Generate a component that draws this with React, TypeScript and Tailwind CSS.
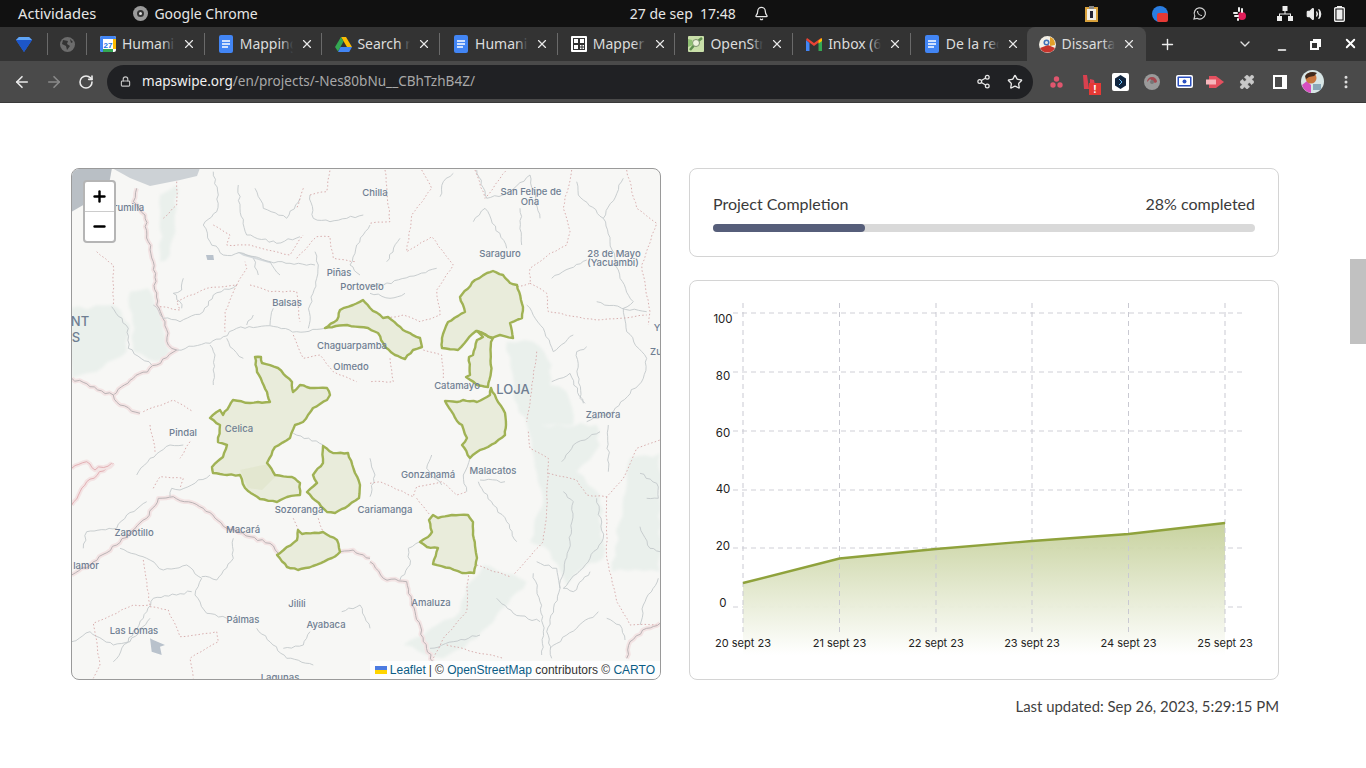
import React from "react";
import { ArrowLeft, ArrowRight, RotateCw, Lock, Share2, Star, MoreVertical, ChevronDown, Plus, X, Minus, Bell, Volume2, Puzzle } from "lucide-react";

type Off = [number, number];
const Q1: Off = [70, 165], Q2: Off = [370, 165], Q3: Off = [70, 425], Q4: Off = [370, 425];
const tx = (o: Off, s: string) =>
  s.split(" ").map((p) => { const [x, y] = p.split(",").map(Number); return `${(o[0] + x / 3).toFixed(1)},${(o[1] + y / 3).toFixed(1)}`; }).join(" ");

const rnd = (n: number) => { const v = Math.sin(n * 12.9898) * 43758.5453; return v - Math.floor(v); };
function wiggle(s: string, amp: number, step = 5, seed = 1, closed = false) {
  const pts = s.split(" ").map((p) => p.split(",").map(Number));
  if (closed) pts.push(pts[0]);
  const out: string[] = [];
  let c = seed * 7.3;
  for (let i = 0; i < pts.length - 1; i++) {
    const [x0, y0] = pts[i], [x1, y1] = pts[i + 1];
    const len = Math.hypot(x1 - x0, y1 - y0);
    const n = Math.max(1, Math.round(len / step));
    const nx = (y0 - y1) / (len || 1), ny = (x1 - x0) / (len || 1);
    for (let k = 0; k < n; k++) {
      const t = k / n;
      const d = k === 0 ? 0 : (rnd((c += 1.37)) - 0.5) * 2 * amp;
      out.push(`${(x0 + (x1 - x0) * t + nx * d).toFixed(1)},${(y0 + (y1 - y0) * t + ny * d).toFixed(1)}`);
    }
  }
  if (!closed) out.push(pts[pts.length - 1].join(","));
  return out.join(" ");
}

const patches: [Off, string][] = [
  [Q1, "270,90 320,60 320,130 300,270 270,290"],
  [Q1, "0,430 130,420 180,480 170,560 80,620 5,640"],
  [Q1, "180,380 235,370 255,420 280,470 300,560 260,590 190,560"],
  [Q2, "410,530 490,530 545,600 540,660 590,680 610,780 470,780 430,700"],
  [Q4, "470,0 680,0 690,60 620,140 690,210 700,400 640,430 590,480 540,380 480,350 520,220"],
  [Q4, "780,100 870,85 870,440 725,440"],
  [Q4, "290,480 340,420 470,470 380,570 320,640 220,700 100,660 200,600 270,560"],
];
const rivers: [Off, string][] = [
  [Q1, "430,20 445,90 440,140 400,180 420,230 460,270 520,265 600,290 660,295 735,300"],
  [Q1, "505,60 510,130 530,210 620,235 690,215"],
  [Q1, "555,70 580,130 650,160 690,100"],
  [Q1, "720,90 730,160 780,170 880,150"],
  [Q1, "735,260 745,300 740,340 720,420 715,490"],
  [Q1, "550,280 565,330"], [Q1, "600,290 630,330"],
  [Q1, "340,340 335,375 310,385 330,410 335,430"],
  [Q1, "500,360 430,390 400,440 330,470 280,460 250,420"],
  [Q1, "320,555 420,535 460,515 500,490 600,482 680,500 765,490"],
  [Q1, "470,520 480,545 520,580"], [Q1, "420,540 435,570 430,660"],
  [Q1, "125,425 175,490 175,550 245,600"], [Q1, "550,450 530,480"], [Q1, "610,430 600,480"],
  [Q1, "900,180 860,240 840,300 870,330"],
  [Q2, "620,50 625,90 700,160 760,40"],
  [Q2, "700,160 720,230 750,340 790,410 760,430 770,500 830,580 820,640 730,740 650,770"],
  [Q2, "310,170 345,130 410,250"], [Q2, "210,95 220,50 250,25"],
  [Q2, "320,15 350,100 410,85 480,30 510,160"],
  [Q2, "545,340 600,310 650,285"], [Q2, "470,420 520,490 550,560 610,510"],
  [Q2, "650,545 620,560 630,700 645,715"], [Q2, "545,650 600,625 640,715"],
  [Q2, "0,360 40,360 200,310"], [Q2, "0,385 60,400 105,385"], [Q2, "50,290 90,220"],
  [Q2, "450,130 455,240"], [Q2, "680,410 755,430 830,440"],
  [Q4, "325,170 370,240 410,290 440,350"], [Q4, "405,170 330,165"],
  [Q4, "580,200 610,230 600,350 570,490 530,620 545,700"],
  [Q4, "680,220 700,340 660,400 580,490 610,500 660,440"],
  [Q4, "500,410 560,430 570,490"], [Q4, "490,445 510,530 520,620 515,690"],
  [Q4, "380,520 430,565 510,590"], [Q4, "540,670 620,610 685,560"], [Q4, "710,580 750,600 765,645"],
  [Q4, "715,0 715,140"], [Q4, "575,110 610,60 690,20"], [Q4, "810,305 840,370 870,380"],
  [Q4, "865,460 820,540 810,600"], [Q4, "810,145 860,175 865,220 830,220"],
  [Q4, "290,200 280,150 300,100"], [Q4, "0,100 15,150 0,215"], [Q4, "150,350 115,370 120,420 90,465"],
  [Q4, "185,90 170,130 215,180"], [Q4, "180,670 250,650 330,630"],
  [Q3, "420,150 330,195 305,190 300,215"], [Q3, "200,150 240,100 300,60 340,60"],
  [Q3, "40,370 50,320 140,310 170,270 230,230"],
  [Q3, "150,370 230,400 280,435 350,420 395,460 375,510 410,565 470,580"],
  [Q3, "560,610 650,700 730,720"], [Q3, "5,650 60,620 130,660 180,650 240,580"],
  [Q3, "365,500 250,520 220,580 130,710"], [Q3, "490,340 490,400 440,465 395,455"],
  [Q3, "670,25 760,60"], [Q3, "815,560 870,540 900,610"], [Q3, "640,670 700,660 720,620"],
];
const dots: [Off, string][] = [
  [Q1, "80,260 130,300 130,420"], [Q1, "320,50 320,120 280,160"],
  [Q1, "430,180 480,210 470,240 540,240 660,270 700,210"], [Q1, "700,70 680,130"],
  [Q1, "720,90 770,80 780,15"], [Q1, "270,425 330,435 320,410 410,370 500,360 530,310 525,290"],
  [Q1, "500,360 465,440 465,500"], [Q1, "540,360 600,380 680,380 690,470"],
  [Q1, "680,280 740,215 780,215 790,280 860,290"], [Q1, "670,510 700,580 750,570 790,620 860,650"],
  [Q1, "220,740 310,705 370,740"],
  [Q2, "45,15 60,170 0,175"],
  [Q2, "155,15 185,70 125,150 110,260 185,215 250,300 200,375 210,450 150,470 100,450 40,460"],
  [Q2, "605,15 580,130 600,200 590,240 540,265 480,310 480,355 440,365"],
  [Q2, "480,355 530,385 535,440 680,465 750,460 830,450"],
  [Q2, "770,15 800,130 860,175 815,300 840,440 835,480"], [Q2, "315,15 345,100 410,15"],
  [Q2, "160,555 215,570 220,640"], [Q2, "60,580 70,650 0,650"], [Q2, "500,560 490,640 470,770"],
  [Q4, "475,20 480,70 535,100 530,250 520,350 430,450"],
  [Q4, "535,145 620,165 650,210 710,215 760,160 800,70 870,45"],
  [Q4, "710,215 710,400 740,530 780,600 860,600"], [Q4, "295,440 290,560 220,640 190,700"],
  [Q4, "320,420 420,455"], [Q4, "230,660 400,700"],
  [Q4, "0,175 30,170 130,215 140,185 215,170 260,210 290,200"], [Q4, "140,220 180,270"],
  [Q3, "220,405 240,540 190,540 70,595 90,720 70,760"],
  [Q3, "240,545 295,555 330,635 440,620 445,650 360,700 370,760"],
  [Q3, "240,0 255,80"], [Q3, "360,50 330,100"], [Q3, "250,190 270,155 340,160 330,190"],
  [Q3, "670,280 690,330"], [Q3, "745,280 760,322"],
];
const borders: [Off, string][] = [
  [Q1, "200,70 190,110 225,150 235,230 250,290 260,420 285,470 295,540 320,555 260,600 190,640 130,690 60,665 5,640"],
  [Q1, "130,690 150,720 210,745"],
  [Q3, "5,240 50,170 130,115"],
  [Q3, "5,130 50,110 75,135 125,115"],
  [Q3, "5,450 60,420 140,360 230,280 265,220 310,215 400,250 470,310 540,335 600,355 625,385"],
  [Q3, "810,380 850,375 900,400"],
  [Q4, "0,410 40,460 110,470 135,560 160,650 190,710"],
  [Q4, "770,700 780,650 830,610 870,595"],
];
const polys: string[] = [
  "325,328 337,320 340,310 353,305 363,300 370,308 383,318 388,317 403,330 420,338 422,347 413,350 405,359 395,355 385,347 378,333 368,328 347,325",
  "493,271 503,275 510,283 517,285 523,307 522,318 510,323 513,338 500,335 492,338 482,333 476,331 467,340 458,350 442,348 442,338 448,322 465,312 460,297 475,280 487,273",
  "477,331 483,337 477,340 473,355 469,357 470,375 466,377 477,385 488,387 491,372 491,342 493,338",
  "445,401 457,402 463,400 477,402 490,395 491,388 498,402 505,413 506,425 505,435 495,443 477,452 470,458 462,445 467,438 462,425 457,421",
  "255,357 261,357 262,363 278,368 292,382 293,392 300,385 310,388 327,388 330,395 327,400 313,408 303,422 295,425 290,438 275,447 267,463 275,475 292,477 300,483 300,495 287,497 277,502 260,499 245,488 240,475 227,475 213,473 212,467 223,457 227,445 218,442 220,425 210,418 220,410 223,415 233,400 250,403 270,402 267,392 257,372",
  "323,446 333,453 348,453 355,473 360,485 359,498 345,508 335,513 327,512 307,492 317,483 313,475 323,463",
  "298,530 302,534 323,532 337,540 340,552 332,558 313,566 298,570 287,567 277,555 297,540",
  "433,515 438,518 452,515 468,515 473,522 473,535 476,553 477,558 474,573 462,573 450,568 433,564 438,548 427,547 420,542 428,537 432,532 429,520",
];
const labels: [string, number, number, number?][] = [
  ["Chilla", 375, 196], ["San Felipe de", 531, 195], ["Oña", 530, 205], ["rumilla", 129, 211], ["Piñas", 339, 276],
  ["Portovelo", 362, 290], ["Balsas", 287, 306], ["Saraguro", 500, 257], ["28 de Mayo", 614, 257], ["(Yacuambi)", 613, 266],
  ["Chaguarpamba", 352, 349], ["Olmedo", 351, 370], ["Catamayo", 457, 389], ["LOJA", 513, 394, 13], ["Zamora", 603, 418],
  ["Pindal", 183, 436], ["Celica", 239, 432], ["Gonzanamá", 428, 478], ["Malacatos", 493, 474], ["Sozoranga", 299, 513],
  ["Cariamanga", 385, 513], ["Macará", 243, 533], ["Zapotillo", 134, 536], ["lamor", 86, 569], ["Amaluza", 431, 606],
  ["Jilili", 297, 607], ["Pálmas", 243, 623], ["Ayabaca", 326, 628], ["Las Lomas", 134, 634], ["Lagunas", 280, 681],
  ["Y", 657, 331], ["Zu", 656, 355], ["NT", 80, 326, 13], ["S", 76, 342, 13],
];

function MapView() {
  return (
    <div className="relative h-[512px] overflow-hidden rounded-lg border border-[#9a9a9a] bg-[#f7f7f5]">
      <svg viewBox="72 169 588 510" className="block h-[510px] w-[588px]">
        <defs><filter id="soft" x="-10%" y="-10%" width="120%" height="120%"><feGaussianBlur stdDeviation="1.6" /></filter></defs>
        <g filter="url(#soft)">
          {patches.map(([o, s], i) => <polygon key={i} points={wiggle(tx(o, s), 2.5, 8, i + 1, true)} fill="#eaf0ec" />)}
        </g>
        <polygon points="71,168 112,168 108,190 92,200 71,212" fill="#b9bfc5" />
        <polygon points="112,168 200,168 197,176 180,180 150,186 130,178" fill="#cdd2d6" />
        <polygon points={tx(Q1, "408,270 430,270 432,285 412,285")} fill="#b9c2cc" />
        <polygon points={tx(Q3, "240,640 250,645 285,660 270,665 275,690 245,680")} fill="#b9c2cc" />
        <polygon points={tx(Q1, "500,260 520,265 600,290 600,295 520,272")} fill="#d4d9dc" />
        {borders.map(([o, s], i) => {
          const p = wiggle(tx(o, s), 1.5, 4, i + 40);
          return (
            <g key={i} fill="none" strokeLinejoin="round">
              <polyline points={p} stroke="#f3e4e4" strokeWidth="4.500" />
              <polyline points={p} stroke={i === 2 || i === 3 ? "#e3b0b4" : "#b9b2b4"} strokeWidth="1" />
            </g>
          );
        })}
        {rivers.map(([o, s], i) => <polyline key={i} points={wiggle(tx(o, s), 1.3, 4, i + 100)} fill="none" stroke="#c3c8cb" strokeWidth="0.9" strokeLinejoin="round" />)}
        {dots.map(([o, s], i) => <polyline key={i} points={wiggle(tx(o, s), 0.7, 6, i + 200)} fill="none" stroke="#d8aeae" strokeWidth="1" strokeDasharray="1.5 2.2" />)}
        {polys.map((p, i) => <polygon key={i} points={wiggle(p, 0.6, 4, i + 300, true)} fill="#a3b557" fillOpacity="0.16" stroke="#a0b254" strokeWidth="2.4" strokeLinejoin="round" />)}
        <polygon points="240,470 258,466 270,464 276,476 262,490 248,488" fill="#a3b557" fillOpacity="0.08" />
        {labels.map(([t, x, y, sz]) => (
          <text key={t + x} x={x} y={y} textAnchor="middle" fontFamily="Inter, sans-serif" fontWeight={500} fontSize={sz ?? 9.5} fill="#6f7e92">{t}</text>
        ))}
      </svg>
      <div className="absolute left-[11px] top-[11px] w-[33px] rounded border-2 border-[#b5b5b5] bg-white font-['Liberation_Sans',sans-serif] text-black">
        <div className="flex h-[30px] items-center justify-center border-b border-[#ccc]"><Plus size={17} strokeWidth={3.4} /></div>
        <div className="flex h-[29px] items-center justify-center"><Minus size={17} strokeWidth={3.4} /></div>
      </div>
      <div className="absolute bottom-0 right-0 flex h-[18px] items-center bg-white/80 px-[5px] font-['Liberation_Sans',sans-serif] text-[12px] text-[#333]">
        <svg width="12" height="8" viewBox="0 0 12 8" className="mr-[3px]"><rect width="12" height="4" fill="#4C7BE1" /><rect y="4" width="12" height="4" fill="#FFD500" /></svg>
        <span className="text-[#0a5c85]">Leaflet</span>
        <span className="mx-[3px]">|</span>
        <span>© <span className="text-[#0a5c85]">OpenStreetMap</span> contributors © <span className="text-[#0a5c85]">CARTO</span></span>
      </div>
    </div>
  );
}

function Chart() {
  const xs = [743, 839.5, 936, 1032, 1128.5, 1225];
  const ys = [313, 372, 431, 490, 548, 607];
  const ly = [323, 380, 437, 493, 550, 607];
  const vals = ["100", "80", "60", "40", "20", "0"];
  const dates = ["20 sept 23", "21 sept 23", "22 sept 23", "23 sept 23", "24 sept 23", "25 sept 23"];
  const line = "743,583 839.5,558.5 936,549 1032,541 1128.5,534 1225,523";
  return (
    <svg viewBox="690 281 588 398" className="block h-[398px] w-[588px]">
      <defs>
        <linearGradient id="ar" x1="0" y1="523" x2="0" y2="655" gradientUnits="userSpaceOnUse">
          <stop offset="0" stopColor="#c5d09a" />
          <stop offset="1" stopColor="#ffffff" />
        </linearGradient>
      </defs>
      {ys.map((y) => <line key={y} x1="733" x2="1245" y1={y} y2={y} stroke="#cfcfd6" strokeDasharray="5 4" />)}
      <polygon points={`${line} 1225,655 743,655`} fill="url(#ar)" fillOpacity="0.95" />
      {xs.map((x) => <line key={x} x1={x} x2={x} y1="303" y2="636" stroke="#c9c9d2" strokeDasharray="5 4" />)}
      <polyline points={line} fill="none" stroke="#8fa23c" strokeWidth="2.4" />
      {vals.map((v, i) => <text key={v} x="723" y={ly[i]} textAnchor="middle" fontFamily="Inter, sans-serif" fontSize="11.5" fill="#222">{v}</text>)}
      {dates.map((d, i) => <text key={d} x={xs[i]} y="647" textAnchor="middle" fontFamily="Inter, sans-serif" fontSize="11" fill="#222">{d}</text>)}
    </svg>
  );
}

const Doc = () => (
  <svg width="16" height="18" viewBox="0 0 16 18"><rect x="1" y="0" width="14" height="18" rx="2" fill="#4285f4" /><path d="M4 6h8M4 9h8M4 12h6" stroke="#fff" strokeWidth="1.5" /></svg>
);
const Cal = () => (
  <svg width="16" height="16" viewBox="0 0 16 16"><rect width="16" height="16" rx="2" fill="#fff" /><path d="M0 2a2 2 0 0 1 2-2h12a2 2 0 0 1 2 2v1H0z" fill="#4285f4" /><path d="M0 3h3v13H2a2 2 0 0 1-2-2z" fill="#4285f4" /><path d="M3 13h10v3H3z" fill="#34a853" /><path d="M13 3h3v10h-3z" fill="#fbbc04" /><text x="8" y="11.5" textAnchor="middle" fontSize="8" fontWeight="700" fontFamily="Liberation Sans" fill="#1a73e8">27</text></svg>
);
const Drive = () => (
  <svg width="17" height="15" viewBox="0 0 17 15"><path d="M6 0h5l6 10h-5z" fill="#fbbc04" /><path d="M6 0l2.500 4.500L3 14.500 0 10z" fill="#34a853" /><path d="M5.500 10H17l-2.800 5H3z" fill="#4285f4" /></svg>
);
const Grid = () => (
  <svg width="16" height="16" viewBox="0 0 16 16"><rect width="16" height="16" rx="1" fill="#fff" /><path d="M2 2h12v12H2z" fill="#333" /><path d="M3 3h4v4H3zM9 3h4v4H9zM3 9h4v4H3z" fill="#fff" /><path d="M9 9h1.500v1.500H9zM11.500 9H13v1.500h-1.500zM9 11.500h1.500V13H9zM11.500 11.500H13V13h-1.500z" fill="#fff" /></svg>
);
const Osm = () => (
  <svg width="16" height="16" viewBox="0 0 16 16"><rect width="16" height="16" rx="1" fill="#c9dfa9" /><path d="M2 14L9 6l5-4" stroke="#5f8f4e" strokeWidth="2.500" fill="none" /><circle cx="8" cy="7" r="3.500" fill="#eef3dd" stroke="#7a8f6a" /><path d="M0 3l4 1 1 5-5 2z" fill="#8fbf73" /></svg>
);
const Gmail = () => (
  <svg width="16" height="13" viewBox="0 0 16 13"><path d="M0 2v11h3.500V5z" fill="#4285f4" /><path d="M16 2v11h-3.500V5z" fill="#34a853" /><path d="M0 2l8 6 8-6-1-2-7 5-7-5z" fill="#ea4335" /><path d="M12.500 2.500L16 0v3l-3.500 2.500z" fill="#fbbc04" /></svg>
);
const Dissart = () => (
  <svg width="17" height="17" viewBox="0 0 17 17"><circle cx="8.500" cy="8.500" r="8.500" fill="#f3efe5" /><path d="M1 12a8.500 8.500 0 0 0 15 0L9 9z" fill="#c6342c" /><path d="M11 1a8 8 0 0 1 5 8l-5 1z" fill="#e0a02a" /><circle cx="7.500" cy="6.500" r="3" fill="#3f70b8" /><circle cx="7.500" cy="6.500" r="1.500" fill="#e6e6e6" /></svg>
);

const tabs: { icon: React.ReactNode; label: string; active?: boolean }[] = [
  { icon: <Cal />, label: "Humanitarian" },
  { icon: <Doc />, label: "Mapping" },
  { icon: <Drive />, label: "Search results" },
  { icon: <Doc />, label: "Humanitarian" },
  { icon: <Grid />, label: "Mapper" },
  { icon: <Osm />, label: "OpenStreet" },
  { icon: <Gmail />, label: "Inbox (6)" },
  { icon: <Doc />, label: "De la red" },
  { icon: <Dissart />, label: "Dissartation", active: true },
];

function Tab({ icon, label, active }: { icon: React.ReactNode; label: string; active?: boolean }) {
  return (
    <div className={`flex h-[34px] shrink-0 items-center ${active ? "-ml-[2px] w-[119.7px] rounded-t-lg bg-[#4a4a4a]" : "w-[117.7px] border-r border-[#6a6a6a] [border-image:linear-gradient(transparent_7px,#6a6a6a_7px,#6a6a6a_27px,transparent_27px)_1]"}`}>
      <div className="ml-[12px] flex w-[18px] shrink-0 justify-center">{icon}</div>
      <div className="relative ml-[5px] h-[20px] w-[53px] overflow-hidden whitespace-nowrap text-[14px] leading-[20px] text-[#dcdcdc]">
        {label}
        <div className={`absolute inset-y-0 right-0 w-[12px] bg-gradient-to-r from-transparent ${active ? "to-[#4a4a4a]" : "to-[#333333]"}`} />
      </div>
      <X size={14} strokeWidth={2} className="ml-[7px] shrink-0 text-[#e8e8e8]" />
    </div>
  );
}

const Ext = ({ children, w = "w-[32px]" }: { children: React.ReactNode; w?: string }) => (
  <div className={`relative flex ${w} shrink-0 justify-center`}>{children}</div>
);

export default function App() {
  return (
    <div className="flex h-[768px] w-[1366px] flex-col overflow-hidden bg-white font-['Noto_Sans',sans-serif]">
      {/* system bar */}
      <div className="relative flex h-[27px] shrink-0 items-center bg-[#111111] pl-[18px] text-[14px] text-[#e6e6e6]">
        <span className="text-[14.7px]">Actividades</span>
        <div className="ml-[37px] flex h-[15px] w-[15px] items-center justify-center rounded-full bg-[#9a9a9a]"><div className="h-[7px] w-[7px] rounded-full border-2 border-[#333] bg-[#ddd]" /></div>
        <span className="ml-[6px]">Google Chrome</span>
        <div className="ml-[372px] flex items-center">
          <span>27 de sep&nbsp; 17:48</span>
          <Bell size={15} className="ml-[18px]" />
        </div>
        <div className="ml-[315px] flex items-center">
          <Ext w="w-[16px]"><svg width="13" height="16" viewBox="0 0 13 16"><rect y="1" width="13" height="15" fill="#d8a03a" /><rect x="2" y="3" width="9" height="11" fill="#f2efe6" /><rect x="4" y="0" width="5" height="3" fill="#888" /><rect x="5" y="5" width="3" height="7" fill="#223" /></svg></Ext>
          <Ext w="w-[16px] ml-[52px]"><svg width="16" height="16" viewBox="0 0 16 16"><circle cx="8" cy="8" r="8" fill="#2a7de1" /><rect x="5" y="7" width="11" height="9" rx="2" fill="#e53935" /></svg></Ext>
          <Ext w="w-[16px] ml-[24px]"><svg width="15" height="15" viewBox="0 0 15 15" fill="none" stroke="#cfcfcf" strokeWidth="1.200"><path d="M2 13l.8-3A5.600 5.600 0 1 1 5 12.300z" /><path d="M5.500 5c0 2.500 2 4.500 4.500 4.500" /></svg></Ext>
          <Ext w="w-[16px] ml-[24px]"><svg width="15" height="15" viewBox="0 0 15 15"><circle cx="10" cy="10" r="4" fill="#e01e5a" /><rect x="1" y="6" width="5" height="2" rx="1" fill="#eee" /><rect x="6" y="1" width="2" height="5" rx="1" fill="#eee" /><rect x="9" y="2" width="2" height="5" rx="1" fill="#eee" /><rect x="2" y="9" width="5" height="2" rx="1" fill="#eee" /><rect x="5" y="12" width="2" height="3" rx="1" fill="#eee" /></svg></Ext>
          <Ext w="w-[16px] ml-[29px]"><svg width="16" height="15" viewBox="0 0 16 15" fill="#eee"><rect x="5.500" y="0" width="5" height="5" /><rect x="0" y="10" width="5" height="5" /><rect x="11" y="10" width="5" height="5" /><path d="M7.500 5h1v2.500H14V10h-1V8.500H3V10H2V7.500h5.500z" /></svg></Ext>
          <Ext w="w-[16px] ml-[13px]"><Volume2 size={16} fill="#eee" /></Ext>
          <Ext w="w-[16px] ml-[10px]"><svg width="11" height="16" viewBox="0 0 11 16"><rect x="3" y="0" width="5" height="2" fill="#eee" /><rect x="0.700" y="1.700" width="9.600" height="13.600" rx="1" fill="none" stroke="#eee" strokeWidth="1.400" /><rect x="2.500" y="3.500" width="6" height="10" fill="#eee" /></svg></Ext>
        </div>
      </div>

      {/* tab strip */}
      <div className="flex h-[34px] shrink-0 items-end bg-[#333333]">
        <div className="flex h-[34px] w-[48px] shrink-0 items-center justify-center border-r border-[#6a6a6a] [border-image:linear-gradient(transparent_7px,#6a6a6a_7px,#6a6a6a_27px,transparent_27px)_1]">
          <svg width="16" height="15" viewBox="0 0 16 15"><path d="M0 3l3-3h10l3 3-8 12z" fill="#2f6fe0" /><path d="M0 3h16L8 15z" fill="#1d56c8" /><path d="M3 0h10l3 3H0z" fill="#5fa4f5" /></svg>
        </div>
        <div className="flex h-[34px] w-[39px] shrink-0 items-center justify-center border-r border-[#6a6a6a] [border-image:linear-gradient(transparent_7px,#6a6a6a_7px,#6a6a6a_27px,transparent_27px)_1]">
          <svg width="15" height="15" viewBox="0 0 15 15"><circle cx="7.500" cy="7.500" r="7.500" fill="#6c6c6c" /><path d="M3 3l5 1-1 3 3 2-3 4-1-4-4-2zM10 2l3 3-2 1z" fill="#333" /></svg>
        </div>
        {tabs.map((t, i) => <Tab key={i} {...t} />)}
        <Plus size={17} strokeWidth={2} className="mb-[8px] ml-[13px] shrink-0 text-[#eee]" />
        <ChevronDown size={16} strokeWidth={2} className="mb-[9px] ml-[61px] shrink-0 text-[#e0e0e0]" />
        <Minus size={12} strokeWidth={3} className="mb-[5px] ml-[23px] shrink-0 text-white" />
        <svg width="11" height="11" viewBox="0 0 11 11" className="mb-[11px] ml-[22px] shrink-0" fill="none" stroke="#fff" strokeWidth="2"><rect x="1" y="3" width="7" height="7" /><path d="M3 1h7v7" /></svg>
        <X size={15} strokeWidth={3} className="mb-[10px] ml-[22px] shrink-0 text-white" />
      </div>

      {/* toolbar */}
      <div className="flex h-[42px] shrink-0 items-center border-b border-[#3a3a3a] bg-[#4a4a4a] pl-[13px]">
        <ArrowLeft size={18} strokeWidth={2.2} className="shrink-0 text-[#eaeaea]" />
        <ArrowRight size={18} strokeWidth={2.2} className="ml-[14px] shrink-0 text-[#8a8a8a]" />
        <RotateCw size={16} strokeWidth={2.4} className="ml-[15px] shrink-0 text-[#eaeaea]" />
        <div className="ml-[13px] flex h-[34px] w-[926px] shrink-0 items-center rounded-full bg-[#202124] pl-[13px]">
          <Lock size={11} strokeWidth={2.5} className="shrink-0 text-[#c4c4c4]" />
          <span className="ml-[11px] text-[13.55px] text-[#f0f0f0]">mapswipe.org<span className="text-[#a8a8a8]">/en/projects/-Nes80bNu__CBhTzhB4Z/</span></span>
          <Share2 size={15} strokeWidth={2} className="ml-auto shrink-0 text-[#e8e8e8]" />
          <Star size={16} strokeWidth={2} className="ml-[16px] mr-[10px] shrink-0 text-[#e8e8e8]" />
        </div>
        <div className="ml-[7px] flex items-center">
          <Ext><svg width="13" height="12" viewBox="0 0 13 12" fill="#e0566e"><circle cx="6.500" cy="3" r="2.700" /><circle cx="3" cy="9" r="2.700" /><circle cx="10" cy="9" r="2.700" /></svg></Ext>
          <Ext w="w-[34px]">
            <svg width="16" height="16" viewBox="0 0 16 16" fill="#d9414f"><path d="M2 1h4l2 14H3zM9 5l4 1 1 5H9z" /></svg>
            <div className="absolute -bottom-[5px] left-[17px] flex h-[12px] w-[12px] items-center justify-center bg-[#e53935] text-[10px] font-bold leading-none text-white">!</div>
          </Ext>
          <Ext w="w-[28px]"><svg width="17" height="18" viewBox="0 0 17 18"><rect width="17" height="18" rx="2" fill="#fff" /><path d="M8.500 2L14 5.500v7L8.500 16 3 12.500v-7z" fill="#10253f" /><path d="M7 6l3 3-3 3" stroke="#6ec6ff" fill="none" /></svg></Ext>
          <Ext w="w-[36px]"><svg width="16" height="16" viewBox="0 0 16 16"><circle cx="8" cy="8" r="8" fill="#9a9a9a" /><path d="M3 8a5 5 0 0 1 10 0l-2 1-5-4z" fill="#a5484f" /><circle cx="8" cy="8" r="2" fill="#777" /></svg></Ext>
          <Ext w="w-[28px]"><svg width="17" height="13" viewBox="0 0 17 13"><rect width="17" height="13" rx="2" fill="#fff" /><rect x="1.500" y="1.500" width="14" height="10" rx="1" fill="#2a4fbf" /><rect x="3" y="3" width="11" height="7" fill="#fff" /><circle cx="8.500" cy="6.500" r="2" fill="#2a4fbf" /></svg></Ext>
          <Ext w="w-[34px]"><svg width="18" height="12" viewBox="0 0 18 12"><path d="M3 0h7l8 6-8 6H3z" fill="#e4505f" /><rect x="0" y="3.500" width="10" height="5" fill="#f7b6bc" /></svg></Ext>
          <Ext w="w-[30px]"><Puzzle size={16} fill="#c9c9c9" strokeWidth={1} className="text-[#c9c9c9]" /></Ext>
          <Ext w="w-[36px]"><svg width="14" height="14" viewBox="0 0 14 14"><rect x="1" y="1" width="12" height="12" fill="none" stroke="#fff" strokeWidth="2" /><rect x="9" y="1" width="4" height="12" fill="#fff" /></svg></Ext>
          <Ext w="w-[28px]"><svg width="23" height="23" viewBox="0 0 23 23"><circle cx="11.500" cy="11.500" r="11.500" fill="#d8e6e6" /><path d="M1 15a11 11 0 0 0 9 8v-8l-4-4z" fill="#d64fc0" /><circle cx="10" cy="8" r="5.500" fill="#c9763f" /><path d="M4 6a8 6 0 0 1 12-3l-3 3-5 1-3 2z" fill="#40291c" /><path d="M12 14h8v6h-8z" fill="#8aa7b8" /></svg></Ext>
          <Ext w="w-[40px]"><MoreVertical size={16} strokeWidth={2.5} className="text-[#e0e0e0]" /></Ext>
        </div>
      </div>

      {/* page */}
      <div className="flex min-h-0 flex-1">
        <main className="w-[1350px] shrink-0 px-[71px] pt-[65px]">
          <div className="grid grid-cols-[590px_590px] gap-x-[28px]">
            <MapView />
            <div className="flex flex-col gap-[23px]">
              <div className="h-[89px] rounded-lg border border-[#d4d4d4] px-[23px] pt-[25px] font-['Lato',sans-serif] text-[16px] text-[#3a3a3a]">
                <div className="flex justify-between leading-[20px]">
                  <span>Project Completion</span>
                  <span>28% completed</span>
                </div>
                <div className="mt-[10px] h-[8px] rounded-full bg-[#d9d9d9]">
                  <div className="h-full rounded-full bg-[#565e7a]" style={{ width: "28%" }} />
                </div>
              </div>
              <div className="h-[400px] rounded-lg border border-[#d4d4d4]"><Chart /></div>
            </div>
          </div>
          <div className="mt-[16px] text-right font-['Lato',sans-serif] text-[14.9px] leading-[20px] text-[#3f3f3f]">Last updated: Sep 26, 2023, 5:29:15 PM</div>
        </main>
        <div className="w-[16px] shrink-0 pt-[156px]">
          <div className="h-[85px] bg-[#c1c1c1]" />
        </div>
      </div>
    </div>
  );
}
